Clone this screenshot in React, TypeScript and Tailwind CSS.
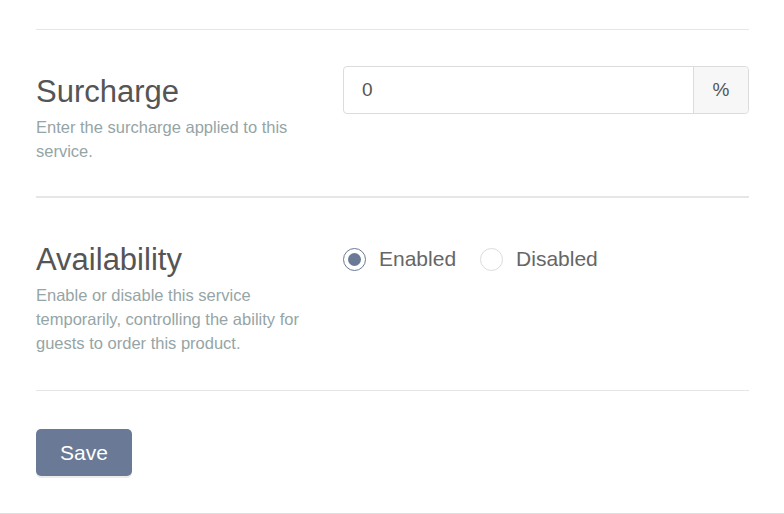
import React from 'react';

const sans = { fontFamily: '"Liberation Sans", Arial, sans-serif' };

function Row({
  title,
  description,
  children,
  className,
  rightPad = 'pt-9',
}: {
  title: string;
  description: string;
  children: React.ReactNode;
  className: string;
  rightPad?: string;
}) {
  return (
    <div className={`flex ${className}`}>
      <div className="w-[307px] shrink-0 pr-6 pt-[44px]">
        <h2 className="text-[31px] leading-[36px] text-[#555]">{title}</h2>
        <p className="mt-[5px] text-[16.5px] leading-6 text-[#95a5a6]">{description}</p>
      </div>
      <div className={`flex-1 ${rightPad}`}>{children}</div>
    </div>
  );
}

function Radio({ label, checked }: { label: string; checked?: boolean }) {
  return (
    <label className="flex items-center gap-[13px]">
      <span
        className={`flex h-[23px] w-[23px] items-center justify-center rounded-full border ${
          checked ? 'border-[#6a7a96]' : 'border-[#dcdcdc]'
        }`}
      >
        {checked && <span className="h-[13px] w-[13px] rounded-full bg-[#6a7a96]" />}
      </span>
      <span className="text-[21px] text-[#666]">{label}</span>
    </label>
  );
}

export default function App() {
  return (
    <div className="min-h-[514px] bg-white" style={sans}>
      <div className="border-b border-[#dedede] pt-[29px]">
        <div className="mx-9 w-[713px]">
          <div className="border-t border-[#e6e6e6]" />
          <Row
            title="Surcharge"
            description="Enter the surcharge applied to this service."
            className="h-[168px] border-b-2 border-[#e6e6e6]"
          >
            <div className="flex h-12 rounded border border-[#dcdcdc]">
              <div className="flex flex-1 items-center pl-[18px] text-[19px] text-[#555]">0</div>
              <div className="flex w-[55px] items-center justify-center rounded-r border-l border-[#dcdcdc] bg-[#f7f7f7] text-[19px] text-[#555]">
                %
              </div>
            </div>
          </Row>
          <Row
            title="Availability"
            description="Enable or disable this service temporarily, controlling the ability for guests to order this product."
            className="h-[193px] border-b border-[#e6e6e6]"
            rightPad="pt-[37px]"
          >
            <div className="flex h-12 items-center gap-[24px]">
              <Radio label="Enabled" checked />
              <Radio label="Disabled" />
            </div>
          </Row>
          <div className="pb-[37px] pt-[38px]">
            <button className="h-[47px] w-[96px] rounded-[5px] bg-[#6a7a96] text-[21px] text-white shadow-[0_2px_0_#ececec]">
              Save
            </button>
          </div>
        </div>
      </div>
    </div>
  );
}
